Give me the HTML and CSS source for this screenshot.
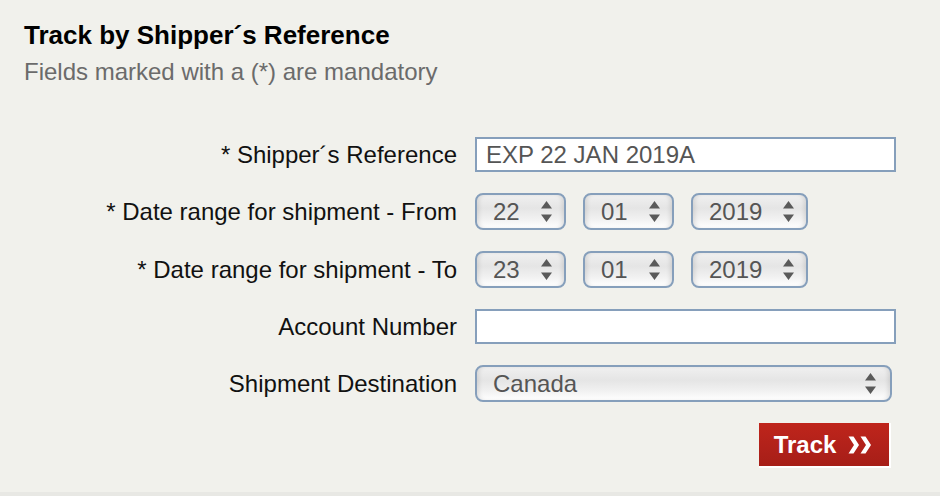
FILE: index.html
```html
<!DOCTYPE html>
<html>
<head>
<meta charset="utf-8">
<link rel="stylesheet" href="styles.css">
</head>
<body>
<div class="panel">
  <h1 class="title">Track by Shipper´s Reference</h1>
  <p class="note">Fields marked with a (*) are mandatory</p>
  <div class="form">
    <div class="label">* Shipper´s Reference</div>
    <div class="control"><div class="input">EXP 22 JAN 2019A</div></div>

    <div class="label">* Date range for shipment - From</div>
    <div class="control dates">
      <div class="select sm"><span>22</span><svg class="arrows" width="11" height="21" viewBox="0 0 11 21"><path d="M5.5 0 L11 7.5 L0 7.5 Z M0 13.5 L11 13.5 L5.5 21 Z" fill="#5a5a5a"/></svg></div>
      <div class="select sm"><span>01</span><svg class="arrows" width="11" height="21" viewBox="0 0 11 21"><path d="M5.5 0 L11 7.5 L0 7.5 Z M0 13.5 L11 13.5 L5.5 21 Z" fill="#5a5a5a"/></svg></div>
      <div class="select md"><span>2019</span><svg class="arrows" width="11" height="21" viewBox="0 0 11 21"><path d="M5.5 0 L11 7.5 L0 7.5 Z M0 13.5 L11 13.5 L5.5 21 Z" fill="#5a5a5a"/></svg></div>
    </div>

    <div class="label">* Date range for shipment - To</div>
    <div class="control dates">
      <div class="select sm"><span>23</span><svg class="arrows" width="11" height="21" viewBox="0 0 11 21"><path d="M5.5 0 L11 7.5 L0 7.5 Z M0 13.5 L11 13.5 L5.5 21 Z" fill="#5a5a5a"/></svg></div>
      <div class="select sm"><span>01</span><svg class="arrows" width="11" height="21" viewBox="0 0 11 21"><path d="M5.5 0 L11 7.5 L0 7.5 Z M0 13.5 L11 13.5 L5.5 21 Z" fill="#5a5a5a"/></svg></div>
      <div class="select md"><span>2019</span><svg class="arrows" width="11" height="21" viewBox="0 0 11 21"><path d="M5.5 0 L11 7.5 L0 7.5 Z M0 13.5 L11 13.5 L5.5 21 Z" fill="#5a5a5a"/></svg></div>
    </div>

    <div class="label">Account Number</div>
    <div class="control"><div class="input"></div></div>

    <div class="label">Shipment Destination</div>
    <div class="control"><div class="select wide"><span>Canada</span><svg class="arrows" width="11" height="21" viewBox="0 0 11 21"><path d="M5.5 0 L11 7.5 L0 7.5 Z M0 13.5 L11 13.5 L5.5 21 Z" fill="#5a5a5a"/></svg></div></div>
  </div>
  <div class="actions">
    <div class="btn"><span>Track</span><svg class="chev" width="24" height="18" viewBox="0 0 24 18"><path d="M0.5 0.5 L5.5 0.5 L11 9 L5.5 17.5 L0.5 17.5 L6 9 Z M12.5 0.5 L17.5 0.5 L23 9 L17.5 17.5 L12.5 17.5 L18 9 Z" fill="#fff"/></svg></div>
  </div>
</div>
</body>
</html>
```
FILE: styles.css
```css
html, body {
  margin: 0;
  padding: 0;
  background: #e8e8e4;
  font-family: "Liberation Sans", Arial, sans-serif;
}
.panel {
  width: 940px;
  height: 492px;
  box-sizing: border-box;
  background: #f1f1ec;
  box-shadow: 0 1px 3px rgba(0,0,0,0.12);
  padding: 20px 0 0 24px;
}
.title {
  margin: 0;
  font-size: 26px;
  font-weight: bold;
  color: #000;
  line-height: 30px;
}
.note {
  margin: 8px 0 0 0;
  font-size: 24px;
  color: #6b6b6b;
  line-height: 28px;
}
.form {
  margin-top: 51px;
  display: grid;
  grid-template-columns: 433px 421px;
  column-gap: 18px;
  row-gap: 21px;
  align-items: center;
}
.label {
  text-align: right;
  font-size: 24px;
  color: #111;
  line-height: 28px;
}
.control {
  display: flex;
  align-items: center;
}
.dates {
  gap: 17px;
}
.input {
  width: 421px;
  height: 35px;
  box-sizing: border-box;
  border: 2px solid #869fbb;
  background: #fff;
  font-size: 24px;
  color: #555;
  padding: 0 0 0 9px;
  line-height: 31px;
}
.select {
  height: 37px;
  box-sizing: border-box;
  border: 2px solid #869fbb;
  border-radius: 8px;
  background: linear-gradient(to bottom, #f0f0f0 0%, #e5e5e5 40%, #f2f2f2 75%, #ffffff 100%);
  box-shadow: inset 4px 0 4px -2px rgba(0,0,0,0.10), inset -4px 0 4px -2px rgba(0,0,0,0.10);
  display: flex;
  align-items: center;
  justify-content: space-between;
  font-size: 24px;
  color: #555;
  padding: 0 12px 0 16px;
}
.select.sm { width: 91px; }
.select.md { width: 117px; }
.select.wide { width: 417px; padding-right: 14px; }
.arrows { display: block; }
.actions {
  display: flex;
  justify-content: flex-end;
  padding-right: 49px;
  margin-top: 21px;
}
.btn {
  width: 132px;
  height: 45px;
  box-sizing: border-box;
  background: linear-gradient(to bottom, #bf251b 0%, #b0211a 60%, #a61e17 100%);
  border-right: 2px solid #fff;
  border-bottom: 2px solid #fff;
  display: flex;
  align-items: center;
  justify-content: center;
  gap: 12px;
  color: #fff;
  font-size: 24px;
  font-weight: bold;
  padding-right: 2px;
}
.chev { display: block; filter: blur(0.6px); }
```
